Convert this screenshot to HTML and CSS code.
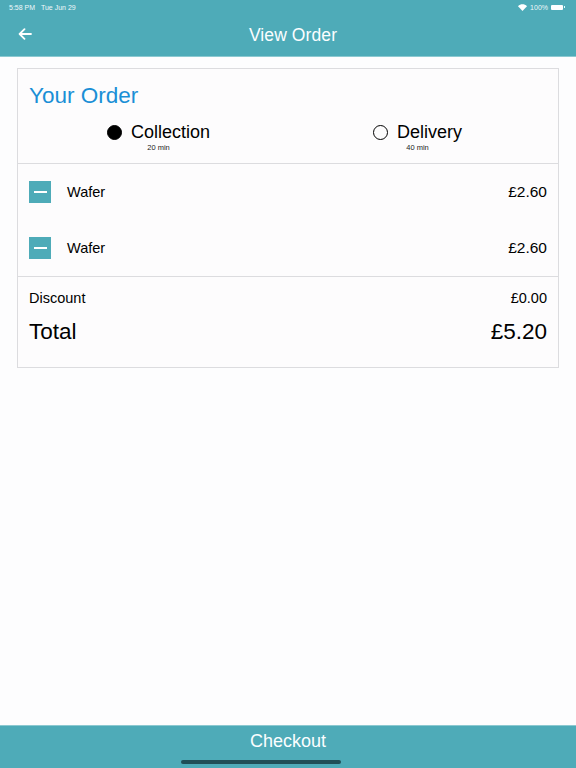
FILE: index.html
```html
<!DOCTYPE html>
<html>
<head>
<meta charset="utf-8">
<link rel="stylesheet" href="styles.css">
</head>
<body>
<div class="app">
  <header class="topbar">
    <div class="status">
      <span class="time">5:58 PM&nbsp;&nbsp;&nbsp;Tue Jun 29</span>
      <span class="sys">
        <svg class="wifi" width="9" height="7" viewBox="0 0 9 7"><path d="M4.5 7L0 2.2C2.6-0.4 6.4-0.4 9 2.2Z" fill="#fff"/></svg>
        <span>100%</span>
        <span class="batt"><span class="batt-fill"></span></span>
      </span>
    </div>
    <div class="navrow">
      <svg class="back" width="14" height="12" viewBox="0 0 14 12"><path d="M13 6H2M6.5 1.2L1.6 6l4.9 4.8" fill="none" stroke="#fff" stroke-width="1.8" stroke-linecap="round" stroke-linejoin="round"/></svg>
      <h1 class="title">View Order</h1>
    </div>
  </header>

  <main class="content">
    <section class="card">
      <div class="card-head">
        <h2 class="heading">Your Order</h2>
        <div class="options">
          <div class="option">
            <div class="opt-line"><span class="radio on"></span><span class="opt-label">Collection</span></div>
            <div class="opt-sub">20 min</div>
          </div>
          <div class="option">
            <div class="opt-line"><span class="radio"></span><span class="opt-label">Delivery</span></div>
            <div class="opt-sub">40 min</div>
          </div>
        </div>
      </div>
      <div class="items">
        <div class="item">
          <span class="minus"><span class="minus-bar"></span></span>
          <span class="item-name">Wafer</span>
          <span class="item-price">£2.60</span>
        </div>
        <div class="item">
          <span class="minus"><span class="minus-bar"></span></span>
          <span class="item-name">Wafer</span>
          <span class="item-price">£2.60</span>
        </div>
      </div>
      <div class="totals">
        <div class="row small"><span>Discount</span><span>£0.00</span></div>
        <div class="row big"><span>Total</span><span>£5.20</span></div>
      </div>
    </section>
  </main>

  <footer class="bottombar">
    <span class="checkout">Checkout</span>
    <span class="home-ind"></span>
  </footer>
</div>
</body>
</html>
```

FILE: styles.css
```css
* { box-sizing: border-box; }
html, body { margin: 0; padding: 0; }
body {
  font-family: "Liberation Sans", Arial, sans-serif;
  background: #fdfdfe;
  color: #000;
}
.app {
  width: 576px;
  height: 768px;
  display: flex;
  flex-direction: column;
}
.topbar {
  background: #4eabb8;
  height: 57px;
  color: #fff;
  border-bottom: 1px solid #8cc9d1;
}
.status {
  height: 14px;
  display: flex;
  justify-content: space-between;
  align-items: center;
  padding: 0 11px 0 9px;
  font-size: 7px;
  color: #eef8fa;
}
.sys { display: flex; align-items: center; gap: 3px; }
.batt {
  width: 12px; height: 5px;
  background: #fff;
  border-radius: 1px;
  position: relative;
  margin-right: 2px;
}
.batt::after {
  content: "";
  position: absolute;
  right: -2px; top: 1.5px;
  width: 1px; height: 2px;
  background: #dff;
}
.navrow {
  height: 42px;
  display: flex;
  align-items: center;
  justify-content: center;
  position: relative;
  padding-left: 10px;
}
.back { position: absolute; left: 18px; top: 14px; }
.title {
  margin: 0;
  font-weight: normal;
  font-size: 17.5px;
  letter-spacing: 0.1px;
  color: #fbfeff;
}
.content {
  flex: 1;
  padding: 11px 17px 0 17px;
}
.card {
  border: 1px solid #dcdcdf;
  background: #fdfcfd;
  height: 300px;
}
.card-head {
  padding: 14px 11px 0 11px;
  height: 95px;
  border-bottom: 1px solid #dcdcdf;
}
.heading {
  margin: 0;
  font-weight: normal;
  font-size: 22.5px;
  color: #1a8fd6;
  line-height: 26px;
}
.options {
  display: grid;
  grid-template-columns: 1fr 1fr;
  margin-top: 11px;
}
.option {
  display: flex;
  flex-direction: column;
  align-items: center;
}
.opt-line {
  display: flex;
  align-items: center;
  gap: 9px;
  height: 24px;
}
.radio {
  width: 15px; height: 15px;
  border-radius: 50%;
  border: 1.6px solid #000;
}
.radio.on { background: #000; }
.opt-label { font-size: 18px; }
.opt-sub {
  font-size: 7.5px;
  color: #222;
  margin-top: -1px;
}
.items {
  height: 113px;
  border-bottom: 1px solid #dcdcdf;
  padding: 17px 11px 0 11px;
  display: flex;
  flex-direction: column;
  gap: 34px;
}
.item {
  display: flex;
  align-items: center;
  height: 22px;
}
.minus {
  width: 22px; height: 22px;
  background: #4eabb8;
  display: flex;
  align-items: center;
  justify-content: center;
}
.minus-bar { width: 13px; height: 2px; background: #fff; }
.item-name { margin-left: 16px; font-size: 14.5px; flex: 1; }
.item-price { font-size: 15.5px; }
.totals {
  padding: 12px 11px 0 11px;
}
.row {
  display: flex;
  justify-content: space-between;
  align-items: center;
}
.row.small { font-size: 14.5px; height: 18px; }
.row.big { font-size: 22.5px; height: 28px; margin-top: 11px; }
.bottombar {
  height: 43px;
  background: #4eabb8;
  border-top: 1px solid #8cc9d1;
  display: flex;
  flex-direction: column;
  align-items: center;
  position: relative;
}
.checkout {
  font-size: 18px;
  color: #fbfeff;
  margin-top: 5px;
}
.home-ind {
  position: absolute;
  bottom: 4px;
  left: 181px;
  width: 160px;
  height: 4px;
  border-radius: 2px;
  background: #1f4f57;
}
```
